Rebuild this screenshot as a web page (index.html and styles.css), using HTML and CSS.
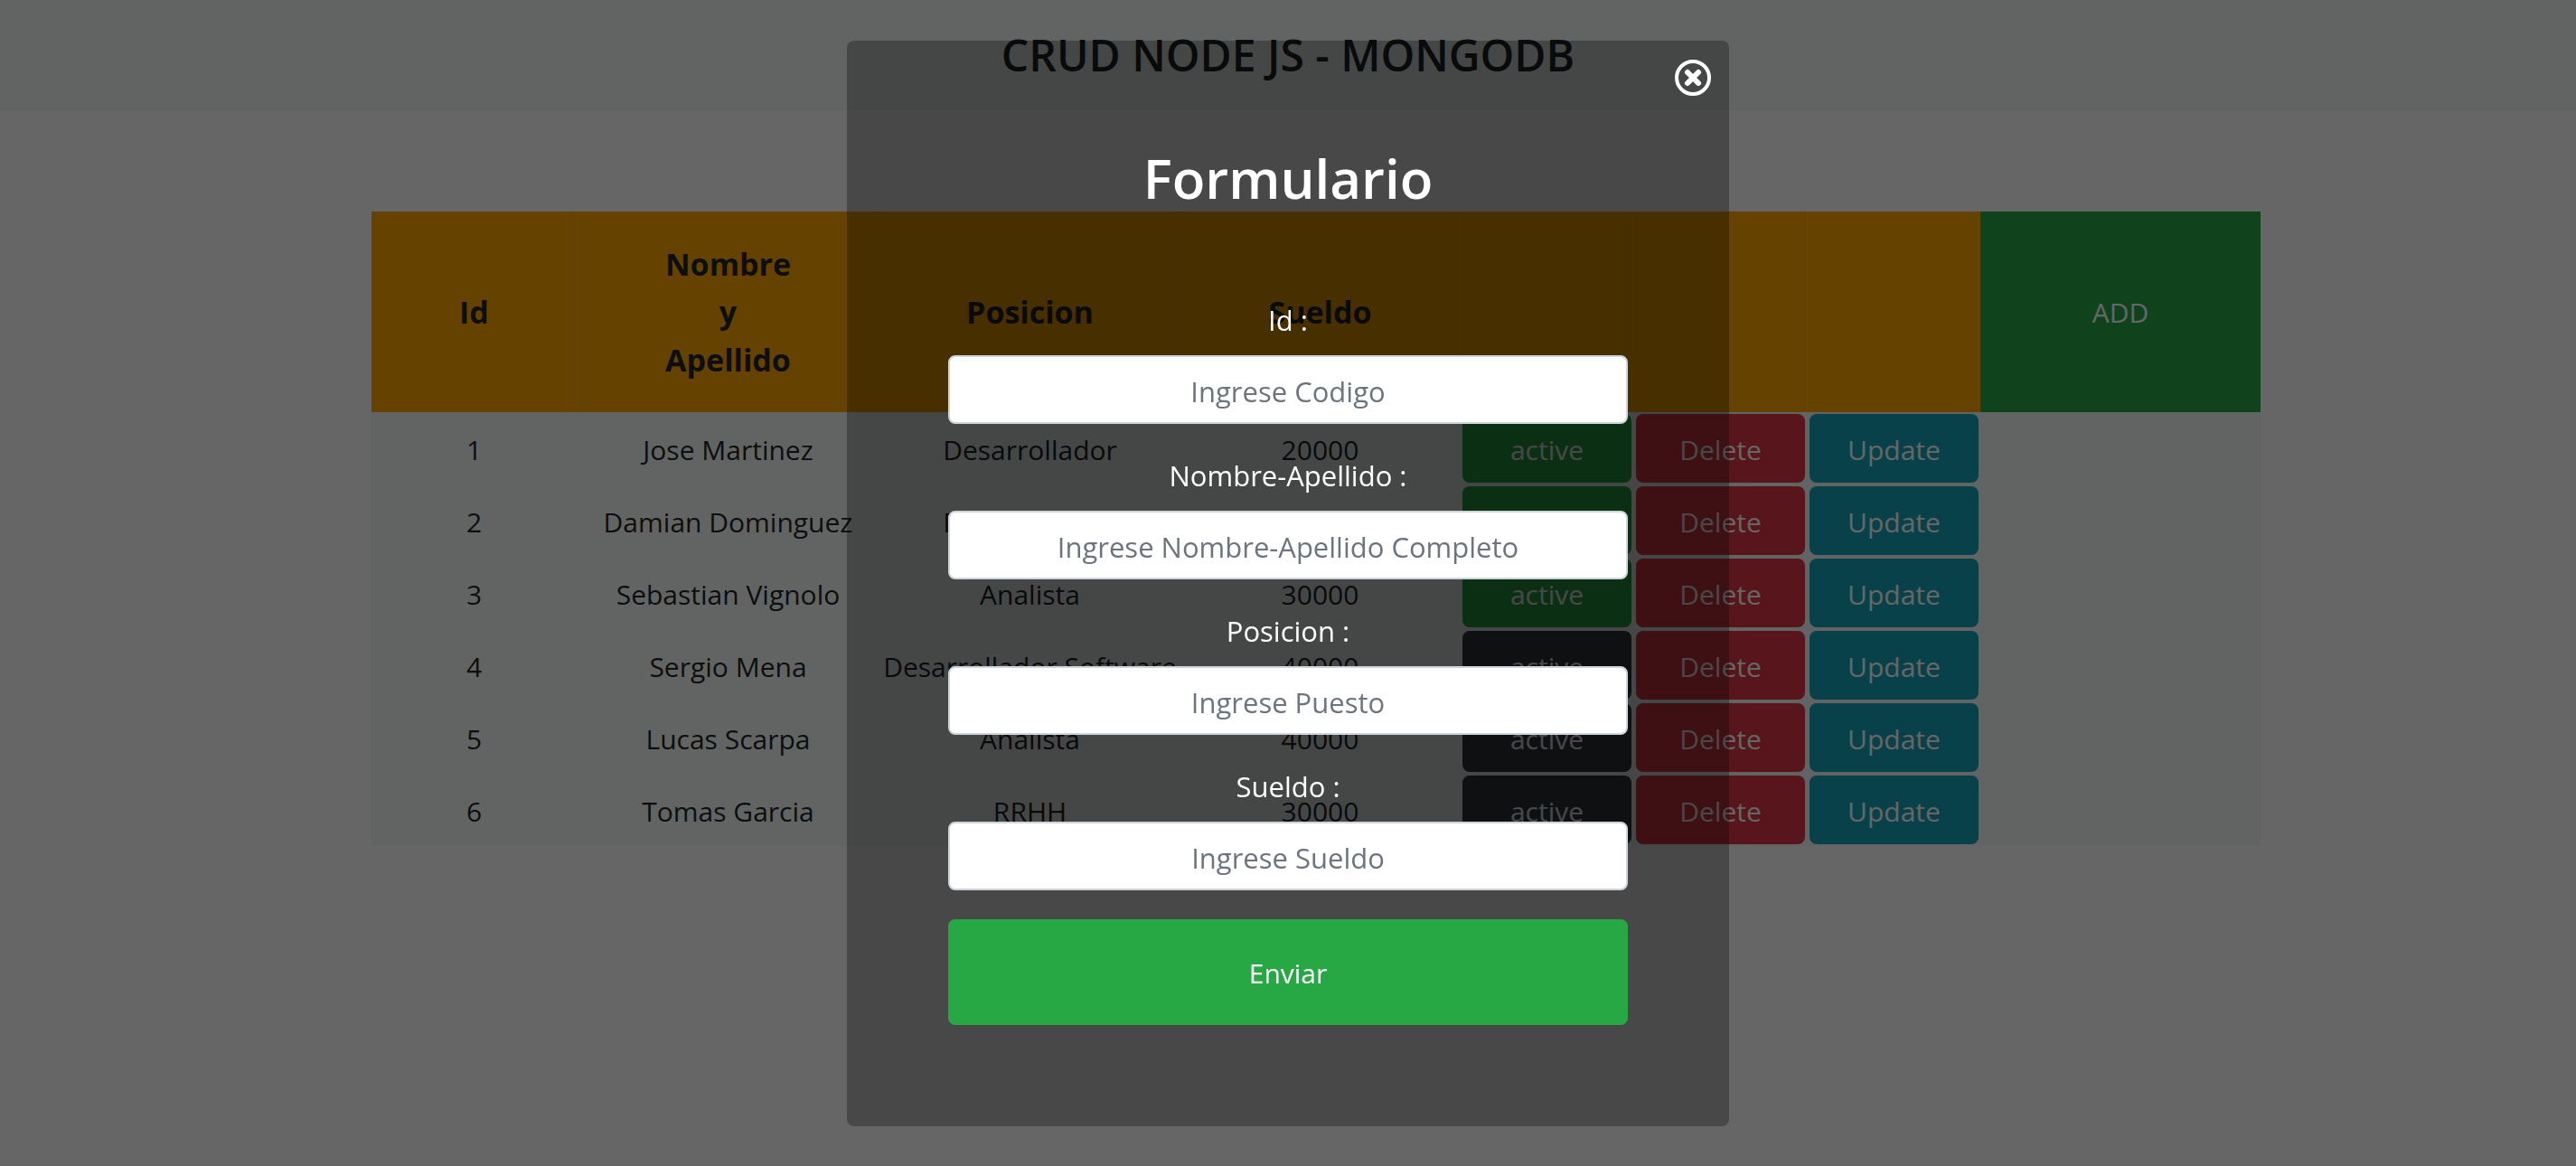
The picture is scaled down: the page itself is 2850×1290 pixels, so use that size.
FILE: index.html
```html
<!DOCTYPE html>
<html lang="es">
<head>
<meta charset="utf-8">
<meta name="viewport" content="width=device-width, initial-scale=1">
<title>CRUD NODE JS - MONGODB</title>
<link rel="stylesheet" href="styles.css">
</head>
<body>
<header class="site-header">
  <h1 class="site-title">CRUD NODE JS - MONGODB</h1>
</header>
<main class="content">
  <table class="staff">
    <colgroup>
      <col class="col-id"><col class="col-name"><col class="col-role"><col class="col-pay">
      <col class="col-action"><col class="col-action"><col class="col-action"><col class="col-add">
    </colgroup>
    <thead>
      <tr>
        <th scope="col">Id</th>
        <th scope="col">Nombre<br>y<br>Apellido</th>
        <th scope="col">Posicion</th>
        <th scope="col">Sueldo</th>
        <th></th>
        <th></th>
        <th></th>
        <th class="add-cell"><button type="button" class="add">ADD</button></th>
      </tr>
    </thead>
    <tbody>
      <tr><td>1</td><td>Jose Martinez</td><td>Desarrollador</td><td>20000</td><td class="action"><button type="button" class="btn success">active</button></td><td class="action"><button type="button" class="btn danger">Delete</button></td><td class="action"><button type="button" class="btn info">Update</button></td><td></td></tr>
      <tr><td>2</td><td>Damian Dominguez</td><td>Desarrollador</td><td>20000</td><td class="action"><button type="button" class="btn success">active</button></td><td class="action"><button type="button" class="btn danger">Delete</button></td><td class="action"><button type="button" class="btn info">Update</button></td><td></td></tr>
      <tr><td>3</td><td>Sebastian Vignolo</td><td>Analista</td><td>30000</td><td class="action"><button type="button" class="btn success">active</button></td><td class="action"><button type="button" class="btn danger">Delete</button></td><td class="action"><button type="button" class="btn info">Update</button></td><td></td></tr>
      <tr><td>4</td><td>Sergio Mena</td><td>Desarrollador Software</td><td>40000</td><td class="action"><button type="button" class="btn dark">active</button></td><td class="action"><button type="button" class="btn danger">Delete</button></td><td class="action"><button type="button" class="btn info">Update</button></td><td></td></tr>
      <tr><td>5</td><td>Lucas Scarpa</td><td>Analista</td><td>40000</td><td class="action"><button type="button" class="btn dark">active</button></td><td class="action"><button type="button" class="btn danger">Delete</button></td><td class="action"><button type="button" class="btn info">Update</button></td><td></td></tr>
      <tr><td>6</td><td>Tomas Garcia</td><td>RRHH</td><td>30000</td><td class="action"><button type="button" class="btn dark">active</button></td><td class="action"><button type="button" class="btn danger">Delete</button></td><td class="action"><button type="button" class="btn info">Update</button></td><td></td></tr>
    </tbody>
  </table>
</main>

<div class="overlay">
  <form class="modal" role="dialog" aria-labelledby="form-title">
    <button type="button" class="close" aria-label="Cerrar">
      <svg viewBox="0 0 40 40" width="40" height="40" fill="none" stroke="#fff" aria-hidden="true">
        <circle cx="20" cy="20" r="18" stroke-width="4"/>
        <path d="M14 14l12 12M26 14L14 26" stroke-width="6" stroke-linecap="round"/>
      </svg>
    </button>
    <h2 class="modal-title" id="form-title">Formulario</h2>
    <div class="field">
      <label for="codigo">Id :</label>
      <input type="text" id="codigo" placeholder="Ingrese Codigo">
    </div>
    <div class="field">
      <label for="nombre">Nombre-Apellido :</label>
      <input type="text" id="nombre" placeholder="Ingrese Nombre-Apellido Completo">
    </div>
    <div class="field">
      <label for="posicion">Posicion :</label>
      <input type="text" id="posicion" placeholder="Ingrese Puesto">
    </div>
    <div class="field">
      <label for="sueldo">Sueldo :</label>
      <input type="text" id="sueldo" placeholder="Ingrese Sueldo">
    </div>
    <button type="submit" class="submit">Enviar</button>
  </form>
</div>
</body>
</html>
```

FILE: styles.css
```css
*,
*::before,
*::after {
  box-sizing: border-box;
}

body {
  margin: 0;
  background: #fff;
  color: #212529;
  font-family: "Segoe UI", "Open Sans", "Noto Sans", sans-serif;
  font-size: 30px;
  line-height: 48px;
  text-align: center;
}

h1,
h2 {
  margin: 0;
  font-weight: 600;
}

button,
input {
  font: inherit;
}

.site-header {
  padding: 32px;
  background: #f5fbf8;
}

.site-title {
  font-size: 48px;
  line-height: 58px;
}

.content {
  padding: 112px 349px 0 411px;
}

.staff {
  width: 100%;
  table-layout: fixed;
  border-collapse: collapse;
  background: #f5fbf8;
}

.col-id { width: 227px; }
.col-name { width: 335px; }
.col-role { width: 333px; }
.col-pay { width: 309px; }
.col-action { width: 192px; }
.col-add { width: 310px; }

.staff th {
  padding: 32px 0 31px;
  background: orange;
  font-size: 34px;
  font-weight: 700;
  line-height: 53px;
}

.staff th + th {
  box-shadow: inset 1px 0 rgba(255, 255, 255, 0.1);
}

.staff td {
  height: 80px;
  padding: 4px 0 0;
  white-space: nowrap;
}

.staff .action {
  padding: 2px 2px 2px 3px;
}

.staff .add-cell {
  height: 222px;
  padding: 0;
}

.add {
  display: block;
  width: 100%;
  height: 222px;
  border: 0;
  background: #28a745;
  color: #fff;
  font-weight: 400;
  font-size: 30px;
}

.btn {
  display: block;
  width: 100%;
  height: 76px;
  padding: 4px 0 0;
  border: 0;
  border-radius: 8px;
  color: #fff;
}

.success { background: #28a745; }
.danger { background: #dc3545; }
.info { background: #17a2b8; }
.dark { background: #343a40; }

.overlay {
  position: fixed;
  inset: 0;
  display: flex;
  align-items: center;
  justify-content: center;
  overflow: auto;
  background: rgba(0, 0, 0, 0.6);
}

.modal {
  position: relative;
  width: 100%;
  max-width: 976px;
  padding: 112px;
  border-radius: 8px;
  background: rgba(0, 0, 0, 0.3);
  color: #fff;
}

.close {
  position: absolute;
  top: 21px;
  right: 20px;
  padding: 0;
  border: 0;
  background: none;
  line-height: 0;
}

.modal-title {
  margin-bottom: 92px;
  font-size: 60px;
  line-height: 80px;
}

.field {
  display: flex;
  flex-direction: column;
  gap: 14px;
  margin-bottom: 32px;
  font-size: 31px;
  line-height: 50px;
}

.field input {
  width: 100%;
  height: 76px;
  padding: 12px 24px 8px;
  border: 2px solid #ced4da;
  border-radius: 8px;
  background: #fff;
  color: #495057;
  text-align: center;
}

.field input::placeholder {
  color: #6c757d;
  opacity: 1;
}

.submit {
  display: block;
  width: 100%;
  height: 117px;
  padding: 4px 0 0;
  border: 0;
  border-radius: 8px;
  background: #28a745;
  color: #fff;
}
```
